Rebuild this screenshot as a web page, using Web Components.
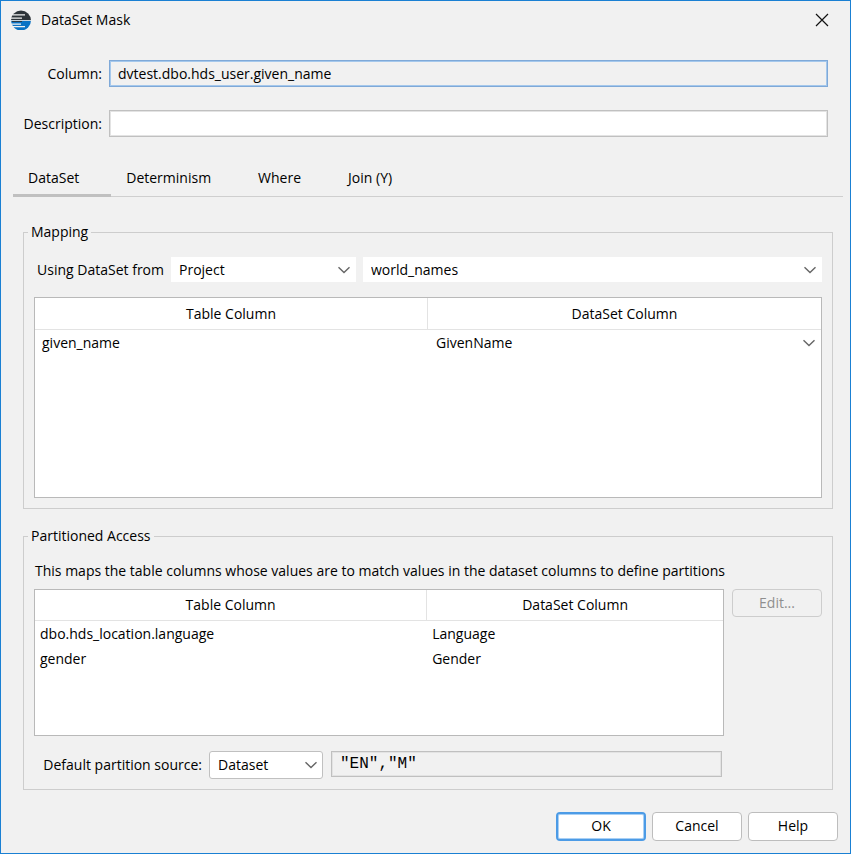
<!DOCTYPE html>
<html lang="en">
<head>
<meta charset="utf-8">
<meta name="viewport" content="width=device-width, initial-scale=1">
<title>DataSet Mask</title>
<style>
  body {
    margin: 0;
    font: 14px/20px "Open Sans", "Noto Sans", sans-serif;
    color: #000;
    background: #f1f1f1;
    --line: #c0c0c0;
    --soft: #e3e3e3;
  }
  .mapping { flex: 1; }
  .source { display: flex; align-items: center; gap: 7px; margin-bottom: 15px; }
  .source .scope { flex: 0 0 auto; }
  .source .name { flex: 1; }
  .hint { margin: 0 0 8px; padding-left: 1px; }
  .access { display: flex; align-items: flex-start; gap: 8px; }
  .access data-grid { flex: 1; height: 147px; }
  .partition { display: flex; align-items: flex-start; gap: 8px; margin: 15px 100px 0 8px; }
  .partition text-field { flex: 1; }
</style>
</head>
<body>

<dialog-window caption="DataSet Mask">
  <text-field label="Column:" value="dvtest.dbo.hds_user.given_name" focused locked></text-field>
  <text-field label="Description:" value=""></text-field>

  <tab-bar slot="tabs" tabs="DataSet,Determinism,Where,Join (Y)" active="0"></tab-bar>

  <group-box slot="content" class="mapping" caption="Mapping">
    <div class="source">
      <select-box class="scope" label="Using DataSet from" options="Project" label-width="130px" width="185px"></select-box>
      <select-box class="name" name="DataSet" options="world_names"></select-box>
    </div>
    <data-grid columns="Table Column,DataSet Column" split="50%" rows="given_name,GivenName" editable style="flex: 1"></data-grid>
  </group-box>

  <group-box slot="content" caption="Partitioned Access">
    <p class="hint">This maps the table columns whose values are to match values in the dataset columns to define partitions</p>
    <div class="access">
      <data-grid columns="Table Column,DataSet Column" split="57%" rows="dbo.hds_location.language,Language;gender,Gender"></data-grid>
      <push-button disabled>Edit...</push-button>
    </div>
    <div class="partition">
      <select-box label="Default partition source:" options="Dataset" label-width="160px" width="114px" outlined></select-box>
      <text-field name="Default partition" value='"EN","M"' locked mono></text-field>
    </div>
  </group-box>

  <push-button slot="actions" primary>OK</push-button>
  <push-button slot="actions">Cancel</push-button>
  <push-button slot="actions">Help</push-button>
</dialog-window>

<script>
// Window frame: title bar, fields, tabs, content, action buttons
class DialogWindow extends HTMLElement {
  shadowRoot = this.attachShadow({ mode: "open" });
  connectedCallback() {
    this.shadowRoot.innerHTML = `
    <style>
      :host {
        display: flex; flex-direction: column; box-sizing: border-box;
        min-height: 100vh; border: 1px solid #1a80d3;
      }
      header { display: flex; align-items: center; height: 38px; padding: 0 21px 0 10px; }
      h1 { flex: 1; margin: 0 0 0 10px; font: inherit; }
      svg { display: block; }
      button { border: 0; padding: 0; background: none; }
      .fields { display: grid; gap: 23px; padding: 21px 22px 0; }
      .tabs { padding: 24px 7px 0 12px; }
      .content { flex: 1; display: flex; flex-direction: column; gap: 17px; padding: 25px 17px 0 22px; }
      footer { display: flex; justify-content: flex-end; gap: 6px; padding: 22px 12px 12px; }
    </style>
    <header>
      <svg width="20" height="20" viewBox="0 0 20 20" aria-hidden="true">
        <path fill="#2d3439" d="M0 10.5a10 10 0 0 1 20 0z"/>
        <path fill="#0a72c4" d="M0 10.5h20a10 10 0 0 1-20 0z"/>
        <path fill="#f1f1f1" d="M2 4.2h12v1.3H2zM0 7.4h11v1.3H0zM0 10.2h20v.9H0zM0 13.4h10v1.3H0zM2 16h12v1.2H2z"/>
        <path fill="#2d3439" d="M1 11.1h10v.9H1z"/>
      </svg>
      <h1>${this.getAttribute("caption")}</h1>
      <button type="button" aria-label="Close">
        <svg width="14" height="14" viewBox="0 0 14 14"><path d="M1 1l12 12M13 1L1 13" stroke="#111" stroke-width="1.2"/></svg>
      </button>
    </header>
    <div class="fields"><slot></slot></div>
    <div class="tabs"><slot name="tabs"></slot></div>
    <div class="content"><slot name="content"></slot></div>
    <footer><slot name="actions"></slot></footer>
    `;
  }
}
customElements.define("dialog-window", DialogWindow);

class TextField extends HTMLElement {
  shadowRoot = this.attachShadow({ mode: "open" });
  connectedCallback() {
    var label = this.getAttribute("label");
    this.shadowRoot.innerHTML = `
    <style>
      :host { display: flex; align-items: center; gap: 7px; }
      label { width: 79px; text-align: right; white-space: nowrap; }
      input {
        flex: 1; min-width: 0; box-sizing: border-box; height: 27px; padding: 0 8px;
        border: 1px solid var(--line); box-shadow: inset 0 0 0 1px var(--soft);
        font: inherit; color: inherit; background: #fff; outline: 0;
      }
      :host([locked]) input { background: #f1f1f1; }
      :host([focused]) input { border-color: #7fa9d8; box-shadow: inset 0 0 0 1px #a5c8ec; }
      :host([mono]) input { height: 26px; font-family: "Liberation Mono", monospace; font-size: 16px; }
    </style>
    ${label ? `<label for="field">${label}</label>` : ""}
    <input id="field" type="text">
    `;
    var input = this.shadowRoot.querySelector("input");
    input.value = this.getAttribute("value");
    input.readOnly = this.hasAttribute("locked");
    if (!label) input.setAttribute("aria-label", this.getAttribute("name"));
  }
}
customElements.define("text-field", TextField);

class TabBar extends HTMLElement {
  shadowRoot = this.attachShadow({ mode: "open" });
  connectedCallback() {
    this.render();
    this.addSwitch();
  }
  render() {
    var active = Number(this.getAttribute("active"));
    var tabs = this.getAttribute("tabs").split(",");
    this.shadowRoot.innerHTML = `
    <style>
      :host { display: block; }
      div { display: flex; box-shadow: inset 0 -1px #cfcfcf; }
      button {
        height: 36px; padding: 1px 32px 0 15px; border: 0; border-bottom: 3px solid transparent;
        font: inherit; color: inherit; background: none;
      }
      button[aria-selected=true] { border-bottom-color: #c0c0c0; }
    </style>
    <div role="tablist">
      ${tabs.map((tab, i) => `<button type="button" role="tab" aria-selected="${i === active}">${tab}</button>`).join("")}
    </div>
    `;
  }
  addSwitch() {
    var buttons = this.shadowRoot.querySelectorAll("button");
    buttons.forEach(function (button) {
      button.addEventListener("click", function () {
        buttons.forEach((b) => b.setAttribute("aria-selected", b === button));
      });
    });
  }
}
customElements.define("tab-bar", TabBar);

class GroupBox extends HTMLElement {
  shadowRoot = this.attachShadow({ mode: "open" });
  connectedCallback() {
    this.shadowRoot.innerHTML = `
    <style>
      :host { display: flex; }
      fieldset {
        flex: 1; min-width: 0; margin: 0; padding: 15px 10px 10px;
        border: 1px solid #cdcdcd; display: flex; flex-direction: column;
      }
      legend { margin-left: -6px; padding: 0 3px; }
    </style>
    <fieldset>
      <legend>${this.getAttribute("caption")}</legend>
      <slot></slot>
    </fieldset>
    `;
  }
}
customElements.define("group-box", GroupBox);

class SelectBox extends HTMLElement {
  shadowRoot = this.attachShadow({ mode: "open" });
  connectedCallback() {
    var label = this.getAttribute("label");
    var options = this.getAttribute("options").split(",");
    this.shadowRoot.innerHTML = `
    <style>
      :host { display: flex; align-items: center; gap: 7px; }
      label { text-align: right; white-space: nowrap; }
      .box { flex: 1; display: grid; align-items: center; }
      select, svg { grid-area: 1 / 1; }
      select {
        appearance: none; width: 100%; height: 25px; padding: 0 24px 0 8px; box-sizing: border-box;
        border: 0; border-radius: 0; font: inherit; color: inherit; background: #fff;
      }
      svg { justify-self: end; margin-right: 5px; pointer-events: none; }
      :host([outlined]) select { height: 28px; border: 1px solid var(--line); border-radius: 3px; }
    </style>
    ${label ? `<label for="list">${label}</label>` : ""}
    <div class="box">
      <select id="list">${options.map((text) => `<option>${text}</option>`).join("")}</select>
      <svg width="14" height="8" viewBox="0 0 14 8"><path d="M1.5 1.2L7 6.6l5.5-5.4" fill="none" stroke="#666" stroke-width="1.4"/></svg>
    </div>
    `;
    var width = this.getAttribute("width");
    if (width) this.shadowRoot.querySelector(".box").style.flex = `0 0 ${width}`;
    if (label) {
      this.shadowRoot.querySelector("label").style.minWidth = this.getAttribute("label-width");
    } else {
      this.shadowRoot.querySelector("select").setAttribute("aria-label", this.getAttribute("name"));
    }
  }
}
customElements.define("select-box", SelectBox);

// rows are split by ";" and cells by ","
class DataGrid extends HTMLElement {
  shadowRoot = this.attachShadow({ mode: "open" });
  connectedCallback() {
    var columns = this.getAttribute("columns").split(",");
    var rows = this.getAttribute("rows").split(";").map((row) => row.split(","));
    this.shadowRoot.innerHTML = `
    <style>
      :host {
        display: block; box-sizing: border-box; min-height: 120px;
        border: 1px solid #b9b9b9; background: #fff;
      }
      table { width: 100%; border-collapse: separate; border-spacing: 0; table-layout: fixed; }
      th { height: 30px; padding: 0; font-weight: inherit; border-bottom: 1px solid var(--soft); }
      th:first-child { border-right: 1px solid var(--soft); }
      td { height: 25px; padding: 0 5px; }
      :host([editable]) th { height: 31px; }
      :host([editable]) td { padding: 0 0 0 7px; }
      :host([editable]) td + td { padding: 0; }
    </style>
    <table>
      <colgroup><col style="width: ${this.getAttribute("split")}"><col></colgroup>
      <thead><tr>${columns.map((name) => `<th scope="col">${name}</th>`).join("")}</tr></thead>
      <tbody>${rows.map((row) => `<tr>${row.map((cell, i) => this.renderCell(cell, i)).join("")}</tr>`).join("")}</tbody>
    </table>
    `;
  }
  renderCell(cell, i) {
    if (i > 0 && this.hasAttribute("editable")) {
      return `<td><select-box name="DataSet Column" options="${cell}"></select-box></td>`;
    }
    return `<td>${cell}</td>`;
  }
}
customElements.define("data-grid", DataGrid);

class PushButton extends HTMLElement {
  shadowRoot = this.attachShadow({ mode: "open" });
  connectedCallback() {
    this.shadowRoot.innerHTML = `
    <style>
      :host { display: block; }
      button {
        display: block; box-sizing: border-box; width: 90px; height: 29px; padding: 0 0 1px;
        border: 1px solid #bdbdbd; border-radius: 4px; font: inherit; color: inherit; background: #fff;
      }
      :host([primary]) button { border: 2px solid #4c9be6; box-shadow: inset 0 0 0 1px #a9d0f5; }
      :host([disabled]) button { height: 28px; color: #8f8f8f; border-color: #cdcdcd; background: #f1f1f1; }
    </style>
    <button type="button"><slot></slot></button>
    `;
    this.shadowRoot.querySelector("button").disabled = this.hasAttribute("disabled");
  }
}
customElements.define("push-button", PushButton);
</script>
</body>
</html>
